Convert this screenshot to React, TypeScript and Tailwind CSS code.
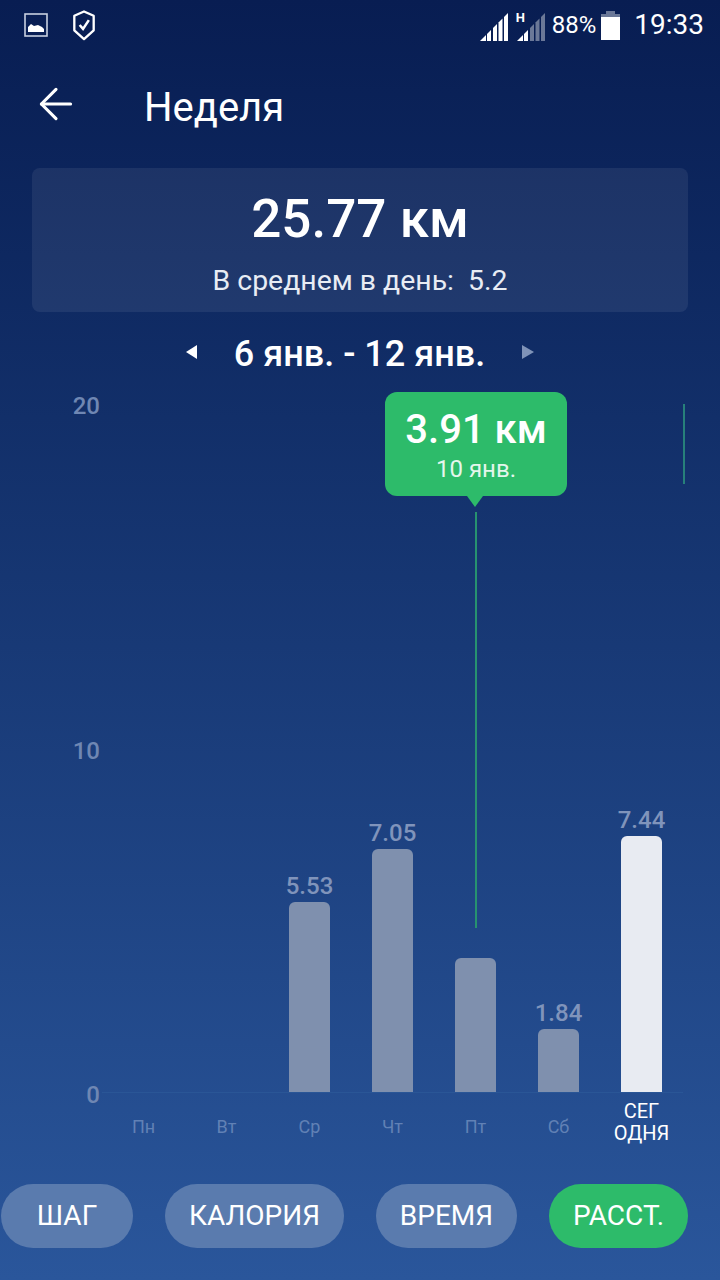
import { ArrowLeft } from 'lucide-react';

const days = [
  { label: 'Пн', value: 0, text: '' },
  { label: 'Вт', value: 0, text: '' },
  { label: 'Ср', value: 5.53, text: '5.53' },
  { label: 'Чт', value: 7.05, text: '7.05' },
  { label: 'Пт', value: 3.91, text: '' },
  { label: 'Сб', value: 1.84, text: '1.84' },
  { label: 'СЕГ ОДНЯ', value: 7.44, text: '7.44', today: true },
];

const tabs = [
  { label: 'ШАГ', width: 'w-[132px]' },
  { label: 'КАЛОРИЯ', width: 'w-[179px]' },
  { label: 'ВРЕМЯ', width: 'w-[141px]' },
  { label: 'РАССТ.', width: 'w-[139px]', active: true },
];

function StatusBar() {
  return (
    <div className="h-[50px] flex items-center pl-[24px] pr-[16px] text-white">
      <svg viewBox="0 0 24 24" className="w-[24px] h-[24px] mr-[24px]">
        <rect x="1" y="1" width="22" height="22" fill="none" stroke="#c8d0e0" strokeWidth="1.6" />
        <path d="M4 19 V14 L7 11 L10 13 L14 12 L18 14 L20 16 V19 Z" fill="#fff" />
      </svg>
      <svg viewBox="0 0 24 32" className="w-[24px] h-[31px]">
        <path d="M12 1.5 L22 6 V21 L12 30 L2 21 V6 Z" fill="none" stroke="#fff" strokeWidth="2.4" strokeLinejoin="round" />
        <path d="M7.5 15.5 L11 19.5 L17 10.5" fill="none" stroke="#fff" strokeWidth="2.6" />
      </svg>
      <div className="flex-1" />
      <svg viewBox="0 0 28 28" className="w-[28px] h-[28px] mt-[3px]">
        <path d="M0 28 L6 22 V28 Z" fill="#fff" />
        <path d="M7 21 L11 17 V28 H7 Z" fill="#fff" />
        <path d="M13 15 L17 11 V28 H13 Z" fill="#fff" />
        <path d="M18.5 9.5 L22.5 5.5 V28 H18.5 Z" fill="#fff" />
        <path d="M24 4 L28 0 V28 H24 Z" fill="#fff" />
      </svg>
      <div className="relative w-[29px] h-[28px] ml-[8px] mt-[3px]">
        <span className="absolute left-0 top-[-2px] text-[13px] leading-[14px] font-bold">H</span>
        <svg viewBox="0 0 28 28" className="absolute right-0 top-0 w-[28px] h-[28px]">
          <path d="M0 28 L6 22 V28 Z" fill="#fff" />
          <path d="M7 21 L11 17 V28 H7 Z" fill="#fff" />
          <path d="M13 15 L17 11 V28 H13 Z" fill="#fff" fillOpacity="0.4" />
          <path d="M18.5 9.5 L22.5 5.5 V28 H18.5 Z" fill="#fff" fillOpacity="0.4" />
          <path d="M24 4 L28 0 V28 H24 Z" fill="#fff" fillOpacity="0.4" />
        </svg>
      </div>
      <span className="text-[24px] ml-[7px] mr-[5px] leading-none">88%</span>
      <div className="w-[19px] h-[29px] flex flex-col items-center">
        <div className="w-[9px] h-[3px] bg-white/40" />
        <div className="w-[19px] h-[3px] bg-white/40" />
        <div className="w-[19px] h-[23px] bg-white" />
      </div>
      <span className="text-[28px] ml-[14px] leading-none">19:33</span>
    </div>
  );
}

function Chart() {
  return (
    <div className="relative mt-[8px] h-[798px]">
      <div className="absolute left-[72px] w-[28px] top-[2px] h-[713px] flex flex-col justify-between items-end text-[24px] leading-[24px] font-medium text-[#6f87b3]">
        <span className="h-[24px]">20</span>
        <span className="h-[24px]">10</span>
        <span className="h-[24px]">0</span>
      </div>

      <div className="absolute left-[102px] top-[12px] w-[581px] h-[689px] border-b border-[#2a5696] flex items-end">
        {days.map((d) => (
          <div key={d.label} className="w-[83px] flex flex-col items-center">
            {d.text && (
              <span className="text-[24px] leading-[32px] font-medium text-[#8094bb]">{d.text}</span>
            )}
            <div
              className={`w-[41px] rounded-t-[6px] ${d.today ? 'bg-[#e8ebf2]' : 'bg-[#7f90ae]'}`}
              style={{ height: d.value * 34.4 }}
            />
          </div>
        ))}
      </div>

      <div className="absolute left-[102px] top-[700px] w-[581px] flex">
        {days.map((d) => (
          <div
            key={d.label}
            className={`w-[83px] text-center leading-[22px] ${d.today ? 'text-white text-[20px] pt-[8px] px-[12px]' : 'text-[#6181b5] text-[18px] pt-[24px]'}`}
          >
            {d.label}
          </div>
        ))}
      </div>

      {/* selected day marker */}
      <div className="absolute left-[475px] top-[120px] w-[2px] h-[416px] bg-[#27926f]" />
      <div className="absolute left-[683px] top-[12px] w-[2px] h-[80px] bg-[#27807a]" />
      <div className="absolute left-[385px] top-0 w-[182px] h-[104px] rounded-[12px] bg-[#2dbb6a] flex flex-col items-center text-white">
        <span className="mt-[16px] text-[40px] leading-[44px] font-medium">3.91 км</span>
        <span className="mt-[3px] text-[24px] leading-[28px] text-[#e4f6ec]">10 янв.</span>
        <div className="absolute left-[82px] top-[104px] w-0 h-0 border-x-[8px] border-x-transparent border-t-[11px] border-t-[#2dbb6a]" />
      </div>
    </div>
  );
}

export default function App() {
  return (
    <div className="w-[720px] h-[1280px] overflow-hidden bg-gradient-to-b from-[#081d52] to-[#2a569b] font-['Roboto',sans-serif] text-white">
      <StatusBar />

      <div className="h-[118px] flex items-center pl-[31px]">
        <ArrowLeft className="w-[50px] h-[50px] mt-[-10px]" strokeWidth={1.5} />
        <span className="ml-[63px] text-[40px] leading-none mt-[-2px]">Неделя</span>
      </div>

      <div className="mx-[32px] h-[144px] rounded-[8px] bg-white/[0.07] flex flex-col items-center">
        <span className="mt-[19px] text-[53px] leading-[64px] font-medium">25.77 км</span>
        <span className="mt-[14px] text-[28.4px] leading-[32px] text-[#e8ecf4] whitespace-pre">В среднем в день:  5.2</span>
      </div>

      <div className="h-[64px] mt-[8px] flex items-center justify-center">
        <div className="w-0 h-0 border-y-[7px] border-y-transparent border-r-[11px] border-r-white" />
        <span className="mx-[37px] mt-[3px] text-[36px] font-medium leading-none">6 янв. - 12 янв.</span>
        <div className="w-0 h-0 border-y-[7px] border-y-transparent border-l-[12px] border-l-[#7f93b8]" />
      </div>

      <Chart />

      <div className="mt-[-6px] pl-[1px] flex gap-[32px]">
        {tabs.map((t) => (
          <div
            key={t.label}
            className={`${t.width} h-[64px] rounded-full flex items-center justify-center text-[28px] ${t.active ? 'bg-[#2dbb6a]' : 'bg-[#5a7bae]'}`}
          >
            {t.label}
          </div>
        ))}
      </div>
    </div>
  );
}
